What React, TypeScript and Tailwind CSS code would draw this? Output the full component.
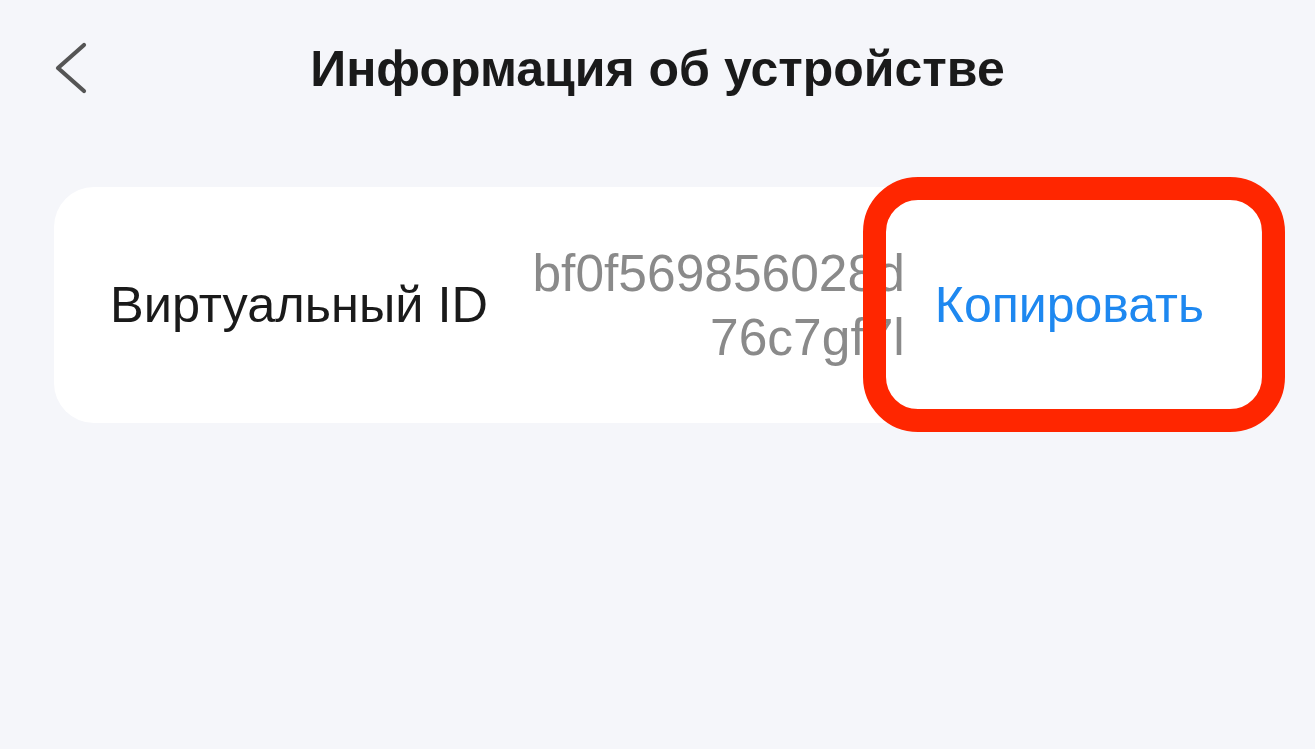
export default function App() {
  return (
    <div className="relative h-[749px] w-[1315px] overflow-hidden bg-[#f5f6fa] font-['Liberation_Sans',Arial,sans-serif]">
      {/* Top bar */}
      <header className="relative flex h-[138px] items-center justify-center">
        <button className="absolute left-[54px] top-[40px] text-[#555]">
          <svg width="34" height="56" viewBox="0 0 34 56" fill="none">
            <polyline
              points="30,5 4,28 30,51"
              stroke="currentColor"
              strokeWidth="4.2"
              strokeLinecap="round"
              strokeLinejoin="round"
            />
          </svg>
        </button>
        <h1 className="text-[50px] font-bold text-[#1a1a1a]">Информация об устройстве</h1>
      </header>

      {/* Device card */}
      <div className="mx-[54px] mt-[49px] flex h-[236px] w-[1207px] items-center rounded-[40px] bg-white pl-[56px] pr-[57px]">
        <span className="text-[50.5px] text-[#1a1a1a]">Виртуальный ID</span>
        <div className="ml-auto text-right text-[51.5px] leading-[64px] text-[#8a8a8a]">
          <div>bf0f569856028d</div>
          <div>76c7gf7l</div>
        </div>
        <span className="ml-[30px] text-[50px] text-[#1e88f0]">Копировать</span>
      </div>

      {/* Highlight frame */}
      <div className="absolute left-[863px] top-[177px] h-[255px] w-[422px] rounded-[55px] border-[23px] border-[#ff2600]" />
    </div>
  );
}
